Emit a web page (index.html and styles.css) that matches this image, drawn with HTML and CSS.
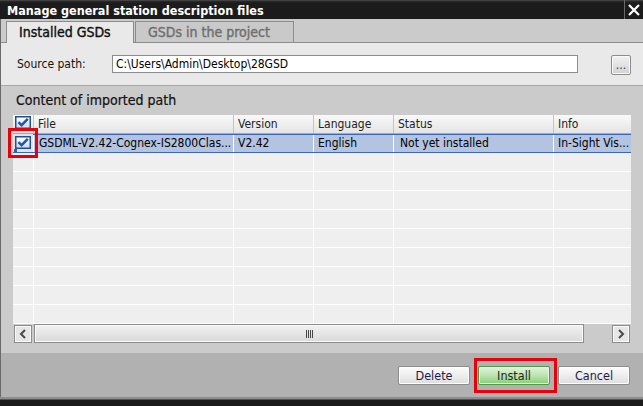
FILE: index.html
```html
<!DOCTYPE html>
<html lang="en">
<head>
<meta charset="utf-8">
<title>Manage general station description files</title>
<link rel="stylesheet" href="styles.css">
</head>
<body>
<div class="dialog">
  <div class="titlebar">
    <span class="title">Manage general station description files</span>
    <span class="close"><svg width="12" height="12" viewBox="0 0 12 12"><path d="M1 1 L11 11 M11 1 L1 11" stroke="#fff" stroke-width="2.2" fill="none"/></svg></span>
  </div>
  <div class="main">
    <div class="tabs">
      <div class="tab active">Installed GSDs</div>
      <div class="tab">GSDs in the project</div>
    </div>
    <div class="source">
      <span class="label">Source path:</span>
      <div class="input">C:\Users\Admin\Desktop\28GSD</div>
      <span class="spacer"></span>
      <button class="browse">...</button>
    </div>
    <div class="content">
      <div class="heading">Content of imported path</div>
      <div class="table">
        <div class="row head">
          <div class="cell cb"><svg class="check" width="16" height="13" viewBox="0 0 16 13"><defs><linearGradient id="g1" x1="0" y1="0" x2="0" y2="1"><stop offset="0" stop-color="#ffffff"/><stop offset="1" stop-color="#cddbef"/></linearGradient></defs><rect x="0.75" y="0.75" width="14.5" height="11.5" fill="url(#g1)" stroke="#234f8e" stroke-width="1.5"/><path d="M3.4 6.2 L6.6 9.2 L12.8 2.8" stroke="#1f57ad" stroke-width="2.5" fill="none"/></svg></div>
          <div class="cell">File</div>
          <div class="cell">Version</div>
          <div class="cell">Language</div>
          <div class="cell">Status</div>
          <div class="cell">Info</div>
        </div>
        <div class="row sel">
          <div class="cell cb mark"><svg class="check" width="16" height="13" viewBox="0 0 16 13"><defs><linearGradient id="g2" x1="0" y1="0" x2="0" y2="1"><stop offset="0" stop-color="#ffffff"/><stop offset="1" stop-color="#cddbef"/></linearGradient></defs><rect x="0.75" y="0.75" width="14.5" height="11.5" fill="url(#g2)" stroke="#234f8e" stroke-width="1.5"/><path d="M3.4 6.2 L6.6 9.2 L12.8 2.8" stroke="#1f57ad" stroke-width="2.5" fill="none"/></svg><span class="focus"></span></div>
          <div class="cell file">GSDML-V2.42-Cognex-IS2800Clas...</div>
          <div class="cell">V2.42</div>
          <div class="cell">English</div>
          <div class="cell status">Not yet installed</div>
          <div class="cell">In-Sight Vis...</div>
        </div>
        <div class="row"><div class="cell cb"></div><div class="cell"></div><div class="cell"></div><div class="cell"></div><div class="cell"></div><div class="cell"></div></div>
        <div class="row"><div class="cell cb"></div><div class="cell"></div><div class="cell"></div><div class="cell"></div><div class="cell"></div><div class="cell"></div></div>
        <div class="row"><div class="cell cb"></div><div class="cell"></div><div class="cell"></div><div class="cell"></div><div class="cell"></div><div class="cell"></div></div>
        <div class="row"><div class="cell cb"></div><div class="cell"></div><div class="cell"></div><div class="cell"></div><div class="cell"></div><div class="cell"></div></div>
        <div class="row"><div class="cell cb"></div><div class="cell"></div><div class="cell"></div><div class="cell"></div><div class="cell"></div><div class="cell"></div></div>
        <div class="row"><div class="cell cb"></div><div class="cell"></div><div class="cell"></div><div class="cell"></div><div class="cell"></div><div class="cell"></div></div>
        <div class="row"><div class="cell cb"></div><div class="cell"></div><div class="cell"></div><div class="cell"></div><div class="cell"></div><div class="cell"></div></div>
        <div class="row"><div class="cell cb"></div><div class="cell"></div><div class="cell"></div><div class="cell"></div><div class="cell"></div><div class="cell"></div></div>
        <div class="row"><div class="cell cb"></div><div class="cell"></div><div class="cell"></div><div class="cell"></div><div class="cell"></div><div class="cell"></div></div>
      </div>
      <div class="hscroll">
        <span class="arrow"><svg width="8" height="10" viewBox="0 0 8 10"><path d="M6 1 L2 5 L6 9" stroke="#4a4a4a" stroke-width="2" fill="none"/></svg></span>
        <span class="thumb"><span class="grip"></span><span class="grip"></span><span class="grip"></span><span class="grip"></span></span>
        <span class="spacer"></span>
        <span class="arrow"><svg width="8" height="10" viewBox="0 0 8 10"><path d="M2 1 L6 5 L2 9" stroke="#4a4a4a" stroke-width="2" fill="none"/></svg></span>
      </div>
    </div>
    <div class="footer">
      <button class="btn">Delete</button>
      <span class="marked"><button class="btn install">Install</button></span>
      <button class="btn">Cancel</button>
    </div>
  </div>
  <div class="bottom"></div>
</div>
</body>
</html>
```
FILE: styles.css
```css
*, *::before, *::after { box-sizing: border-box; }
body {
  margin: 0;
  width: 643px;
  height: 406px;
  overflow: hidden;
  background: #1b1b1b;
  font-family: "DejaVu Sans Condensed", "DejaVu Sans", sans-serif;
  font-stretch: condensed;
  font-size: 12px;
  color: #000;
}
.dialog { display: flex; flex-direction: column; height: 406px; }
.titlebar {
  height: 19px;
  display: flex;
  align-items: center;
  background: linear-gradient(#5a5a5a 0, #2a2a2a 1px, #1c1c1c 3px, #1b1b1b);
  color: #fff;
  font-weight: bold;
  font-size: 12.5px;
  padding-left: 7px;
}
.title { flex: 1; padding-top: 1px; }
.close {
  width: 19px;
  height: 19px;
  border-left: 1px solid #6a6a6a;
  display: flex;
  align-items: center;
  justify-content: center;
}
.main { border-left: 1px solid #6a6a6a; display: flex; flex-direction: column; }
.tabs {
  height: 24px;
  background: #cbcbcb;
  border-bottom: 1px solid #8c8c8c;
  display: flex;
  align-items: flex-end;
  padding-left: 5px;
}
.tab {
  height: 21px;
  border: 1px solid #8c8c8c;
  border-bottom: none;
  background: #c9c9c9;
  color: #6f6f6f;
  font-size: 14px;
  -webkit-text-stroke: 0.4px currentColor;
  padding: 1px 0 0 12px;
  width: 159px;
  margin-left: 1px;
  line-height: 18px;
}
.tab.active {
  height: 22px;
  margin-bottom: -1px;
  width: 128px;
  margin-left: 0;
  background: #e9e9e9;
  color: #111;
}
.source {
  height: 43px;
  background: #e9e9e9;
  border-bottom: 1px solid #a8a8a8;
  display: flex;
  align-items: flex-start;
  padding: 12px 12px 0 16px;
}
.label { width: 95px; line-height: 18px; color: #111; }
.input {
  width: 466px;
  height: 18px;
  background: #fff;
  border: 1px solid #8c8c8c;
  padding-left: 3px;
  line-height: 16px;
  color: #000;
}
.spacer { flex: 1; }
.browse {
  width: 20px;
  height: 20px;
  padding: 0;
  border: 1px solid #8c8c8c;
  border-radius: 2px;
  background: linear-gradient(#f2f2f2, #d2d2d2);
  box-shadow: inset 0 0 0 1px #fafafa;
  font-family: inherit;
  font-size: 12px;
  color: #2c3c80;
  line-height: 14px;
}
.content {
  background: #cbcbcb;
  padding: 5px 12px 10px 12px;
}
.heading {
  font-size: 14px;
  line-height: 19px;
  padding-left: 3px;
  margin-bottom: 5px;
  color: #111;
  -webkit-text-stroke: 0.2px currentColor;
}
.table { width: 618px; }
.row {
  display: grid;
  grid-template-columns: 20px 200px 80px 80px 160px 78px;
  height: 19px;
  background: #efefef;
  border-bottom: 1px solid #fff;
}
.cell {
  border-left: 1px solid #fff;
  padding-left: 4px;
  line-height: 18px;
  white-space: nowrap;
  overflow: hidden;
}
.cell.cb {
  border-left: none;
  padding: 1px 0 0 2px;
  display: flex;
  align-items: flex-start;
  position: relative;
  overflow: visible;
}
.row.head {
  background: linear-gradient(#f9f9f9, #e4e4e4);
  border-bottom: 1px solid #a9a9a9;
  color: #222;
}
.row.head .cell { border-left-color: #c4c4c4; line-height: 18px; }
.row.head .cell.cb { border-left: none; }
.row.sel {
  background: #b3c3e0;
  border-top: 1px solid #3a66bd;
  border-bottom: 1px solid #3a66bd;
}
.row.sel .cell { line-height: 17px; }
.row.sel .cell.cb { background: #e2e2e2; margin-top: -1px; padding-top: 2px; }
.focus {
  position: absolute;
  left: 1px;
  bottom: 0;
  width: 3px;
  height: 3px;
  background: #2f5fc4;
}
.row.sel .cell.file { padding-left: 5px; }
.row.sel .cell.status { padding-left: 6px; }
.mark::after {
  content: "";
  position: absolute;
  left: -5px;
  top: -6px;
  width: 30px;
  height: 30px;
  border: 3px solid #e8000b;
}
.hscroll {
  height: 19px;
  display: flex;
  align-items: center;
}
.arrow {
  width: 18px;
  height: 18px;
  margin: 1px 1px 0 1px;
  border: 1px solid #8c8c8c;
  box-shadow: inset 0 0 0 1px #fafafa;
  background: #e6e6e6;
  display: flex;
  align-items: center;
  justify-content: center;
}
.thumb {
  width: 550px;
  height: 19px;
  margin-left: 1px;
  border: 1px solid #8c8c8c;
  box-shadow: inset 0 0 0 1px #fafafa;
  background: linear-gradient(#f1f1f1, #dadada);
  display: flex;
  align-items: center;
  justify-content: center;
  gap: 1px;
}
.grip { width: 1px; height: 8px; background: #454545; }
.footer {
  height: 44px;
  background: #b1b1b1;
  display: flex;
  justify-content: flex-end;
  align-items: flex-start;
  padding: 13px 13px 0 0;
  gap: 8px;
}
.btn {
  width: 72px;
  height: 19px;
  padding: 0;
  border: 1px solid #8c8c8c;
  border-radius: 2px;
  background: linear-gradient(#fdfdfd, #dedede);
  box-shadow: inset 0 0 0 1px #ffffff;
  font-family: inherit;
  font-stretch: condensed;
  font-size: 12.5px;
  color: #1e1a4a;
  line-height: 16px;
}
.btn.install {
  border-color: #4f9a3f;
  background: linear-gradient(#e4f3df, #b7e2ab 55%, #86cf74);
  box-shadow: inset 0 0 0 1px #eaf7e6;
  color: #1a2a1a;
}
.marked { position: relative; display: flex; }
.marked::after {
  content: "";
  position: absolute;
  left: -4px;
  top: -8px;
  right: -7px;
  bottom: -8px;
  border: 3px solid #e8000b;
}
.bottom { height: 3px; background: #8d8d8d; border-bottom: 1px solid #555; }
```
